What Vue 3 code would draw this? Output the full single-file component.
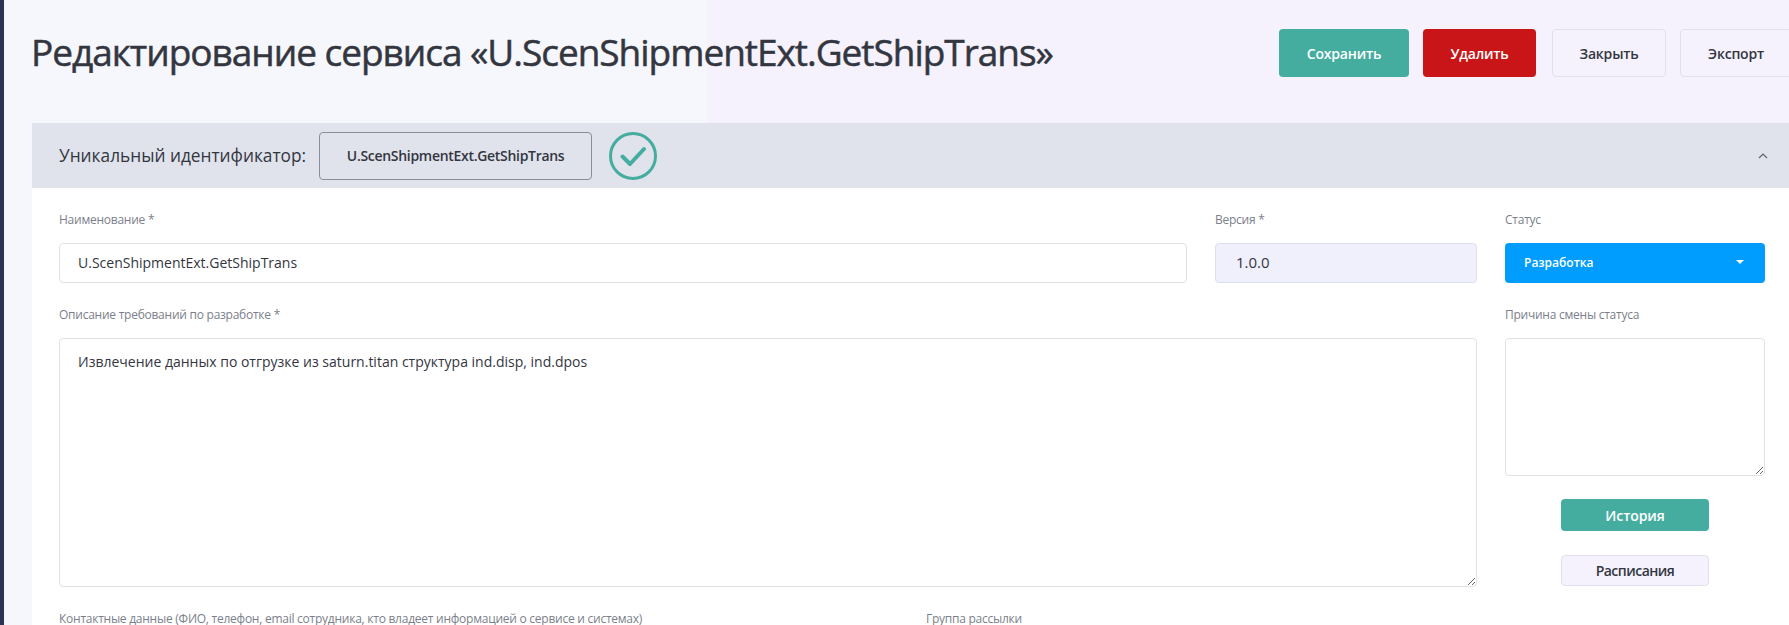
<template>
  <div class="page">
    <div class="rail"></div>
    <main class="content">
      <header class="top">
        <h1 class="title">Редактирование сервиса «{{ service.id }}»</h1>
        <div class="actions">
          <button class="btn btn-save">Сохранить</button>
          <button class="btn btn-delete">Удалить</button>
          <button class="btn btn-plain">Закрыть</button>
          <button class="btn btn-plain btn-export">Экспорт</button>
        </div>
      </header>

      <section class="card">
        <div class="card-head">
          <span class="uid-label">Уникальный идентификатор:</span>
          <span class="uid-box">{{ service.id }}</span>
          <svg class="uid-ok" viewBox="0 0 48 48" width="48" height="48" fill="none">
            <circle cx="24" cy="24" r="22.5" stroke="#45ad9f" stroke-width="3" />
            <path d="M13.5 24.5l7.5 7.5 14-15" stroke="#45ad9f" stroke-width="4" stroke-linecap="round" stroke-linejoin="round" />
          </svg>
          <svg class="chevron" viewBox="0 0 10 6" width="10" height="6" fill="none">
            <path d="M1 5l4-4 4 4" stroke="#5d6270" stroke-width="1.2" />
          </svg>
        </div>

        <div class="card-body">
          <div class="form-grid">
            <div class="field">
              <label class="label">Наименование *</label>
              <div class="control control-name">{{ service.id }}</div>
            </div>
            <div class="field">
              <label class="label">Версия *</label>
              <div class="control control-version">1.0.0</div>
            </div>
            <div class="field">
              <label class="label">Статус</label>
              <div class="status">
                <span>Разработка</span>
                <i class="caret"></i>
              </div>
            </div>

            <div class="field field-wide">
              <label class="label">Описание требований по разработке *</label>
              <textarea class="area area-desc" readonly>Извлечение данных по отгрузке из saturn.titan структура ind.disp, ind.dpos</textarea>
            </div>
            <div class="field">
              <label class="label">Причина смены статуса</label>
              <textarea class="area area-reason" readonly></textarea>
              <div class="side-buttons">
                <button class="btn btn-save btn-side btn-history">История</button>
                <button class="btn btn-plain btn-side btn-schedule">Расписания</button>
              </div>
            </div>
          </div>

          <div class="contacts">
            <label class="label">Контактные данные (ФИО, телефон, email сотрудника, кто владеет информацией о сервисе и системах)</label>
            <label class="label">Группа рассылки</label>
          </div>
        </div>
      </section>
    </main>
  </div>
</template>

<script setup>
const service = {
  id: 'U.ScenShipmentExt.GetShipTrans'
}
</script>

<style scoped>
.page {
  display: flex;
  width: 100%;
  height: 625px;
  overflow: hidden;
  font-family: "Open Sans", "Noto Sans", sans-serif;
  color: #33363f;
  background: linear-gradient(to right, #f6f7fc 707px, #f5f2fd 707px);
}

.rail {
  flex: 0 0 4px;
  background: #2b3252;
}

.content {
  flex: 1;
  min-width: 0;
  padding-left: 28px;
}

.top {
  display: flex;
  justify-content: space-between;
  align-items: flex-start;
  height: 123px;
}

.title {
  margin: 26px 0 0 -1px;
  font-size: 37px;
  line-height: 52px;
  font-weight: 400;
  color: #33363f;
  white-space: nowrap;
  letter-spacing: -1.03px;
  -webkit-text-stroke: 0.5px #33363f;
}

.actions {
  display: flex;
  gap: 14px;
  margin-top: 29px;
  margin-right: -3px;
}

.btn {
  height: 48px;
  border: 1px solid transparent;
  border-radius: 4px;
  font-family: inherit;
  font-size: 14px;
  font-weight: 600;
  letter-spacing: -0.2px;
  padding: 0;
}

.btn-save {
  width: 130px;
  background: #45ad9f;
  color: #fff;
}

.btn-delete {
  width: 113px;
  margin-right: 2px;
  background: #c91517;
  color: #fff;
}

.btn-plain {
  width: 114px;
  background: #f5f2fd;
  border-color: #e2e0ec;
  color: #33363f;
}

.btn-export {
  width: 112px;
}

.card {
  background: #fff;
}

.card-head {
  display: flex;
  align-items: center;
  height: 65px;
  padding: 0 21px 0 27px;
  background: #e0e3ec;
}

.uid-label {
  font-size: 17.3px;
  color: #33363f;
  white-space: nowrap;
}

.uid-box {
  display: flex;
  align-items: center;
  justify-content: center;
  width: 273px;
  height: 48px;
  margin-left: 13px;
  box-sizing: border-box;
  border: 1px solid #8a8e9b;
  border-radius: 4px;
  font-size: 14px;
  font-weight: 600;
  letter-spacing: -0.3px;
}

.uid-ok {
  margin-left: 17px;
}

.chevron {
  margin-left: auto;
}

.card-body {
  padding: 0 24px 0 27px;
}

.form-grid {
  display: grid;
  grid-template-columns: 1fr 262px 260px;
  column-gap: 28px;
}

.field-wide {
  grid-column: span 2;
}

.field {
  display: flex;
  flex-direction: column;
  min-width: 0;
}

.label {
  display: block;
  height: 20px;
  margin: 22px 0 13px;
  font-size: 12px;
  line-height: 20px;
  letter-spacing: -0.25px;
  color: #7b7f8a;
  white-space: nowrap;
}

.control,
.status {
  display: flex;
  align-items: center;
  box-sizing: border-box;
  height: 40px;
  padding-bottom: 2px;
  border-radius: 4px;
  font-size: 15px;
}

.control {
  padding-left: 18px;
  border: 1px solid #e0e2e8;
  background: #fff;
}

.control-name {
  font-size: 14px;
}

.control-version {
  padding-left: 20px;
  border-color: #dcdeee;
  background: #eff0fb;
}

.status {
  justify-content: space-between;
  padding-right: 21px;
  padding-left: 19px;
  background: #009dff;
  color: #fff;
  font-size: 12px;
  font-weight: 600;
}

.caret {
  width: 0;
  height: 0;
  border-left: 4px solid transparent;
  border-right: 4px solid transparent;
  border-top: 4px solid #fff;
}

.area {
  display: block;
  box-sizing: border-box;
  width: 100%;
  margin: 0;
  padding: 13px 18px;
  border: 1px solid #e0e2e8;
  border-radius: 4px;
  outline: none;
  background: #fff;
  font-family: inherit;
  font-size: 14px;
  line-height: 20px;
  color: #33363f;
}

.area-desc {
  height: 249px;
}

.area-reason {
  height: 138px;
}

.side-buttons {
  display: flex;
  flex-direction: column;
  align-items: center;
  gap: 24px;
  margin-top: 23px;
}

.btn-side {
  width: 148px;
  font-size: 14px;
}

.btn-history {
  height: 32px;
  letter-spacing: -0.1px;
}

.btn-schedule {
  height: 31px;
  letter-spacing: -0.5px;
}

.contacts {
  display: grid;
  grid-template-columns: 867px 1fr;
}
</style>

<style>
html,
body {
  margin: 0;
  overflow: hidden;
}
</style>
